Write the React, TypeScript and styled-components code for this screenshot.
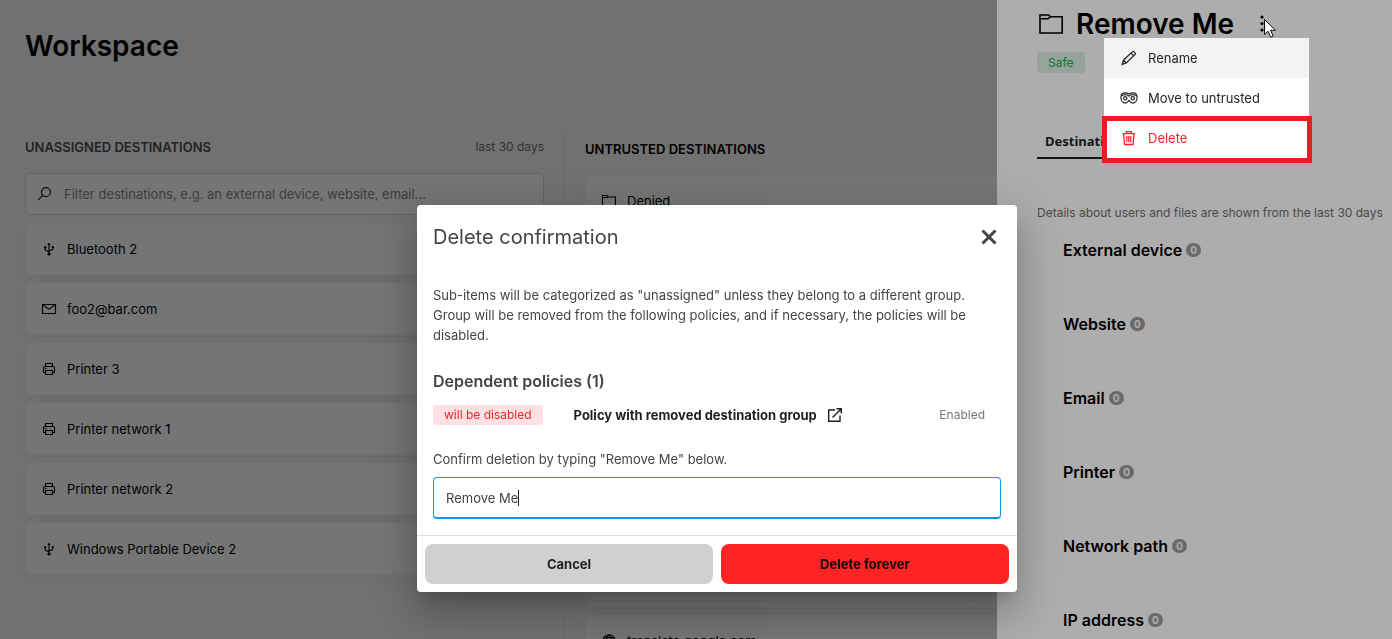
import React, { useState } from "react";
import styled, { createGlobalStyle, css } from "styled-components";

const GlobalStyle = createGlobalStyle`
  *, *::before, *::after { box-sizing: border-box; }
  html, body, #root { height: 100%; }
  body {
    margin: 0;
    overflow: hidden;
    background: #f7f7f7;
    color: #000;
    font-family: Inter, "Liberation Sans", sans-serif;
    font-size: 13px;
    line-height: 20px;
  }
  h1, h2, h3, p, ul { margin: 0; padding: 0; }
  ul { list-style: none; }
  button, input { font: inherit; }
`;

const Page = styled.main`
  height: 100%;
  overflow: hidden;
  padding: 28px 25px 0;
`;

const PageTitle = styled.h1`
  font-size: 28px;
  line-height: 36px;
  font-weight: 600;
`;

const Board = styled.div`
  display: flex;
  margin-top: 66px;
`;

const Column = styled.section<{ $wide?: boolean }>`
  ${(p) =>
    p.$wide
      ? css`
          flex: 1;
          min-width: 0;
          margin-left: 20px;
          border-left: 1px solid #ececec;
          padding-left: 20px;
        `
      : css`
          flex: 0 0 519px;
        `}
`;

const ColumnHead = styled.header<{ $strong?: boolean }>`
  display: flex;
  justify-content: space-between;
  align-items: center;
  padding: ${(p) => (p.$strong ? "9px 0 8px" : "7px 0 16px")};
`;

const ColumnTitle = styled.h2<{ $strong?: boolean }>`
  font-size: 13px;
  line-height: 20px;
  font-weight: 600;
  text-transform: uppercase;
  color: ${(p) => (p.$strong ? "#000" : "#4d4d4d")};
`;

const Period = styled.span`
  font-size: 12px;
  color: #6e6e6e;
`;

const Filter = styled.label`
  display: flex;
  align-items: center;
  gap: 12px;
  height: 42px;
  padding: 0 12px;
  background: #fff;
  border: 1px solid #dcdcdc;
  border-radius: 4px;
  color: #1e1e1e;
`;

const FilterInput = styled.input`
  flex: 1;
  border: 0;
  outline: 0;
  padding: 0;
  background: none;
  &::placeholder {
    color: #868686;
    opacity: 1;
  }
`;

const Cards = styled.ul`
  display: flex;
  flex-direction: column;
  gap: 8px;
  margin-top: 8px;
`;

const Card = styled.li<{ $expanded?: boolean }>`
  display: flex;
  align-items: center;
  gap: 10px;
  height: ${(p) => (p.$expanded ? 372 : 52)}px;
  padding: 0 16px;
  background: #fff;
  border-radius: 8px;
  box-shadow: 0 4px 16px rgba(0, 0, 0, 0.05);
`;

const Backdrop = styled.div`
  position: fixed;
  inset: 0;
  background: rgba(0, 0, 0, 0.32);
`;

const Drawer = styled.aside`
  position: fixed;
  inset: 0 0 0 auto;
  width: 395px;
  padding: 6px 0 0 40px;
  overflow: hidden;
  background: #fff;
`;

const DrawerHead = styled.header`
  display: flex;
  align-items: center;
  height: 36px;
`;

const DrawerTitle = styled.h1`
  margin: 0 18px 0 12px;
  font-size: 28px;
  line-height: 36px;
  font-weight: 600;
`;

const IconButton = styled.button`
  display: flex;
  padding: 0;
  border: 0;
  background: none;
  color: inherit;
  cursor: pointer;
`;

const Tag = styled.span<{ $tone: "safe" | "danger" }>`
  display: inline-block;
  padding: 0 11px;
  border-radius: 3px;
  font-size: 12px;
  ${(p) =>
    p.$tone === "safe"
      ? css`
          margin-top: 10px;
          line-height: 21px;
          color: #1fa953;
          background: #daf2e3;
        `
      : css`
          line-height: 20px;
          color: #f8232c;
          background: #ffe1e3;
        `}
`;

const Tabs = styled.nav`
  display: flex;
  margin-top: 51px;
`;

const Tab = styled.button`
  height: 35px;
  padding: 0 8px;
  border: 0;
  border-bottom: 2px solid #1f1f1f;
  background: none;
  font-family: "Noto Sans", sans-serif;
  font-weight: 700;
  color: #1f1f1f;
`;

const Note = styled.p`
  margin-top: 44px;
  font-size: 12px;
  white-space: nowrap;
  color: #6e6e6e;
`;

const Groups = styled.ul`
  display: flex;
  flex-direction: column;
  gap: 50px;
  margin-top: 15px;
  padding-left: 26px;
`;

const Group = styled.li`
  display: flex;
  align-items: center;
  gap: 4px;
  font-size: 16px;
  line-height: 24px;
  font-weight: 600;
`;

const Count = styled.span`
  min-width: 15px;
  border-radius: 7px;
  background: #9c9c9c;
  color: #fff;
  font-size: 10px;
  line-height: 14px;
  font-weight: 700;
  text-align: center;
`;

const Menu = styled.ul`
  position: fixed;
  top: 38px;
  right: 83px;
  width: 205px;
  background: #fff;
`;

const MenuItem = styled.button<{ $active?: boolean; $danger?: boolean }>`
  display: flex;
  align-items: center;
  gap: 10px;
  width: 100%;
  height: 40px;
  padding: 0 16px;
  border: 0;
  text-align: left;
  background: ${(p) => (p.$active ? "#f3f3f3" : "#fff")};
  color: ${(p) => (p.$danger ? "#f8232c" : "#262626")};
`;

const Highlight = styled.div`
  position: fixed;
  top: 116px;
  right: 80px;
  width: 210px;
  height: 47px;
  border: 5px solid #ed1c24;
  pointer-events: none;
`;

const Cursor = styled.svg`
  position: fixed;
  top: 18px;
  right: 115px;
`;

const DialogLayer = styled.div`
  position: fixed;
  inset: 0;
  display: flex;
  justify-content: center;
  align-items: flex-start;
  padding: 205px 0 0 42px;
`;

const Dialog = styled.form`
  width: 600px;
  background: #fff;
  border-radius: 4px;
  color: #444;
  box-shadow: 0 11px 15px -7px rgba(0, 0, 0, 0.2), 0 24px 38px 3px rgba(0, 0, 0, 0.14),
    0 9px 46px 8px rgba(0, 0, 0, 0.12);
`;

const DialogHead = styled.header`
  display: flex;
  justify-content: space-between;
  align-items: center;
  padding: 16px 20px 0 16px;
`;

const DialogTitle = styled.h2`
  font-size: 20px;
  line-height: 32px;
  font-weight: 400;
`;

const DialogBody = styled.div`
  padding: 32px 16px 16px;
`;

const Paragraph = styled.p`
  padding-right: 16px;
`;

const Subtitle = styled.h3`
  margin-top: 24px;
  font-size: 16px;
  line-height: 24px;
  font-weight: 600;
`;

const Policy = styled.div`
  display: flex;
  align-items: center;
  margin-top: 12px;
  padding-right: 16px;
`;

const PolicyLink = styled.a`
  display: flex;
  align-items: center;
  gap: 10px;
  margin-left: 31px;
  color: #1f1f1f;
  font-weight: 700;
  text-decoration: none;
`;

const Status = styled.span`
  margin-left: auto;
  font-size: 12px;
  color: #757575;
`;

const ConfirmLabel = styled.label`
  display: block;
  margin-top: 24px;
`;

const ConfirmField = styled.div`
  position: relative;
  margin-top: 8px;
`;

const ConfirmInput = styled.input`
  display: block;
  width: 100%;
  height: 42px;
  padding: 0 12px;
  border: 1px solid #0f97e8;
  border-bottom-width: 2px;
  border-radius: 4px;
  outline: 0;
  color: #444;
  caret-color: transparent;
`;

const Caret = styled.span`
  position: absolute;
  top: 13px;
  left: 85px;
  width: 1px;
  height: 16px;
  background: #222;
  pointer-events: none;
`;

const DialogFoot = styled.footer`
  display: flex;
  gap: 8px;
  padding: 8px;
  border-top: 1px solid #dedede;
`;

const Action = styled.button<{ $danger?: boolean }>`
  flex: 1;
  height: 40px;
  border: 0;
  border-radius: 8px;
  font-weight: 700;
  color: ${(p) => (p.$danger ? "#0f0f0f" : "#1f1f1f")};
  background: ${(p) => (p.$danger ? "#ff2323" : "#d1cfd0")};
`;

const Svg = styled.svg`
  flex: none;
  fill: none;
  stroke: currentColor;
`;

type IconName = "usb" | "mail" | "printer" | "folder" | "globe";

const icons: Record<IconName, React.ReactNode> = {
  usb: (
    <>
      <path d="M8 3V13M4.2 6.500v1.800c0 .9.6 1.500 1.500 1.700L8 10.600M11.800 6v1.500c0 .9-.6 1.400-1.500 1.600L8 9.700" />
      <path d="M8 1.400 9.600 4H6.400Z" fill="currentColor" stroke="none" />
      <circle cx="8" cy="13" r="1.600" fill="currentColor" stroke="none" />
      <circle cx="4.200" cy="6.200" r="1.200" fill="currentColor" stroke="none" />
      <path d="M10.800 5h2v2h-2z" fill="currentColor" stroke="none" />
    </>
  ),
  mail: <path d="M1.500 3.500h13v9h-13zM2 4l6 4.200L14 4" />,
  printer: (
    <path d="M4.500 5.500v-3h7v3M4.500 11.500h-2V7c0-.9.6-1.500 1.500-1.500h8c.9 0 1.500.6 1.500 1.500v4.500h-2M4.500 9.500h7v4h-7zM4 7.500h1.500" />
  ),
  folder: <path d="M1.500 13V2.500h4.700l1 1.500h7.300v9zM1.500 4.500h4.700l1-.5" />,
  globe: (
    <>
      <circle cx="8" cy="8" r="6.200" />
      <path d="M1.800 8h12.400M3 4.600h10M3 11.400h10M8 1.800c-3.600 3.600-3.600 8.800 0 12.400M8 1.800c3.600 3.600 3.600 8.800 0 12.400" />
    </>
  ),
};

const Icon = ({ name }: { name: IconName }) => (
  <Svg width="16" height="16" viewBox="0 0 16 16" strokeWidth="1.100" aria-hidden="true">
    {icons[name]}
  </Svg>
);

const unassigned: { icon: IconName; label: string }[] = [
  { icon: "usb", label: "Bluetooth 2" },
  { icon: "mail", label: "foo2@bar.com" },
  { icon: "printer", label: "Printer 3" },
  { icon: "printer", label: "Printer network 1" },
  { icon: "printer", label: "Printer network 2" },
  { icon: "usb", label: "Windows Portable Device 2" },
];

const groups = ["External device", "Website", "Email", "Printer", "Network path", "IP address"];

export default function App() {
  const [typed, setTyped] = useState("Remove Me");

  return (
    <>
      <GlobalStyle />
      <Page>
        <PageTitle>Workspace</PageTitle>
        <Board>
          <Column>
            <ColumnHead>
              <ColumnTitle>Unassigned destinations</ColumnTitle>
              <Period>last 30 days</Period>
            </ColumnHead>
            <Filter>
              <Svg width="14" height="14" viewBox="0 0 14 14" strokeWidth="1.200" aria-hidden="true">
                <circle cx="7.900" cy="5.200" r="4.500" />
                <path d="M4.700 8.400.4 12.800" />
              </Svg>
              <FilterInput
                aria-label="Filter destinations"
                placeholder="Filter destinations, e.g. an external device, website, email..."
              />
            </Filter>
            <Cards>
              {unassigned.map((item) => (
                <Card key={item.label}>
                  <Icon name={item.icon} />
                  {item.label}
                </Card>
              ))}
            </Cards>
          </Column>
          <Column $wide>
            <ColumnHead $strong>
              <ColumnTitle $strong>Untrusted destinations</ColumnTitle>
            </ColumnHead>
            <Cards>
              <Card>
                <Icon name="folder" />
                Denied
              </Card>
              <Card $expanded />
              <Card>
                <Icon name="globe" />
                translate.google.com
              </Card>
            </Cards>
          </Column>
        </Board>
      </Page>

      <Backdrop />
      <Drawer>
        <DrawerHead>
          <Svg width="27" height="24" viewBox="0 0 27 24" strokeWidth="1.600" aria-hidden="true">
            <path d="M3 21V3h8.600l1.900 1.800H25.200V21zM3 6.800h7.800l2.700-2" />
          </Svg>
          <DrawerTitle>Remove Me</DrawerTitle>
          <IconButton type="button" aria-label="More actions">
            <svg width="20" height="20" viewBox="0 0 20 20" fill="currentColor">
              <circle cx="10" cy="3" r="1.600" />
              <circle cx="10" cy="9.500" r="1.600" />
              <circle cx="10" cy="16" r="1.600" />
            </svg>
          </IconButton>
        </DrawerHead>
        <Tag $tone="safe">Safe</Tag>
        <Tabs>
          <Tab type="button">Destinations</Tab>
        </Tabs>
        <Note>Details about users and files are shown from the last 30 days</Note>
        <Groups>
          {groups.map((label) => (
            <Group key={label}>
              {label}
              <Count>0</Count>
            </Group>
          ))}
        </Groups>
      </Drawer>

      <Backdrop />
      <DialogLayer>
        <Dialog role="dialog" aria-labelledby="dialog-title" onSubmit={(e) => e.preventDefault()}>
          <DialogHead>
            <DialogTitle id="dialog-title">Delete confirmation</DialogTitle>
            <IconButton type="button" aria-label="Close">
              <Svg width="16" height="16" viewBox="0 0 16 16" strokeWidth="3">
                <path d="m1.500 1.500 13 13M14.500 1.500l-13 13" />
              </Svg>
            </IconButton>
          </DialogHead>
          <DialogBody>
            <Paragraph>
              Sub-items will be categorized as "unassigned" unless they belong to a different group.
              Group will be removed from the following policies, and if necessary, the policies will be
              disabled.
            </Paragraph>
            <Subtitle>Dependent policies (1)</Subtitle>
            <Policy>
              <Tag $tone="danger">will be disabled</Tag>
              <PolicyLink href="#policy">
                Policy with removed destination group
                <Svg width="16" height="16" viewBox="0 0 16 16" strokeWidth="1.400" aria-hidden="true">
                  <path d="M8 3H1.700v11.300H13V8.500M5.500 10.500l8.600-8.600M9.500 1.700h4.800v4.800" />
                </Svg>
              </PolicyLink>
              <Status>Enabled</Status>
            </Policy>
            <ConfirmLabel htmlFor="confirm">Confirm deletion by typing "Remove Me" below.</ConfirmLabel>
            <ConfirmField>
              <ConfirmInput id="confirm" autoFocus value={typed} onChange={(e) => setTyped(e.target.value)} />
              <Caret />
            </ConfirmField>
          </DialogBody>
          <DialogFoot>
            <Action type="button">Cancel</Action>
            <Action type="submit" $danger>
              Delete forever
            </Action>
          </DialogFoot>
        </Dialog>
      </DialogLayer>

      <Menu>
        <li>
          <MenuItem type="button" $active>
            <Svg width="18" height="16" viewBox="0 0 18 16" strokeWidth="1.300" aria-hidden="true">
              <path d="m2.200 14.400 1.300-4.200 8.700-8.300c.6-.6 1.300-.6 1.900 0l.8.800c.6.6.6 1.300 0 1.900l-8.700 8.400zM11 3.100l2.700 2.700M3.500 10.200l2.700 2.800" />
            </Svg>
            Rename
          </MenuItem>
        </li>
        <li>
          <MenuItem type="button">
            <Svg width="18" height="16" viewBox="0 0 18 16" strokeWidth="1.200" aria-hidden="true">
              <path d="M9 4C7.500 3 6.300 2.800 5 2.800 2.600 2.800.9 4.800.9 7.600c0 3.200 2 5.500 4.500 5.500 1.900 0 2.800-1.700 3.600-2.700.8 1 1.700 2.700 3.600 2.700 2.500 0 4.500-2.300 4.500-5.500 0-2.800-1.700-4.800-4.100-4.800C11.700 2.800 10.500 3 9 4Z" />
              <path d="M1.300 6.200c2-2 5.700-2 7.700 0 2-2 5.700-2 7.700 0" />
              <circle cx="5.300" cy="8.300" r="1.700" />
              <circle cx="12.700" cy="8.300" r="1.700" />
            </Svg>
            Move to untrusted
          </MenuItem>
        </li>
        <li>
          <MenuItem type="button" $danger>
            <Svg width="18" height="16" viewBox="0 0 18 16" strokeWidth="1.300" aria-hidden="true">
              <path d="M2.500 3.700h12.600M6.300 3.700V1.600h5v2.100M3.600 3.700l.9 10.800h8.600L14 3.700M6.800 6v6.200M8.800 6v6.200M10.800 6v6.200" />
            </Svg>
            Delete
          </MenuItem>
        </li>
      </Menu>
      <Highlight />
      <Cursor width="14" height="22" viewBox="0 0 14 22" aria-hidden="true">
        <path
          d="M1.500 1.500v15l3.500-3.300 2.700 6 2.500-1.100-2.600-5.800h4.900z"
          fill="#fff"
          stroke="#111"
          strokeWidth="1"
        />
      </Cursor>
    </>
  );
}
